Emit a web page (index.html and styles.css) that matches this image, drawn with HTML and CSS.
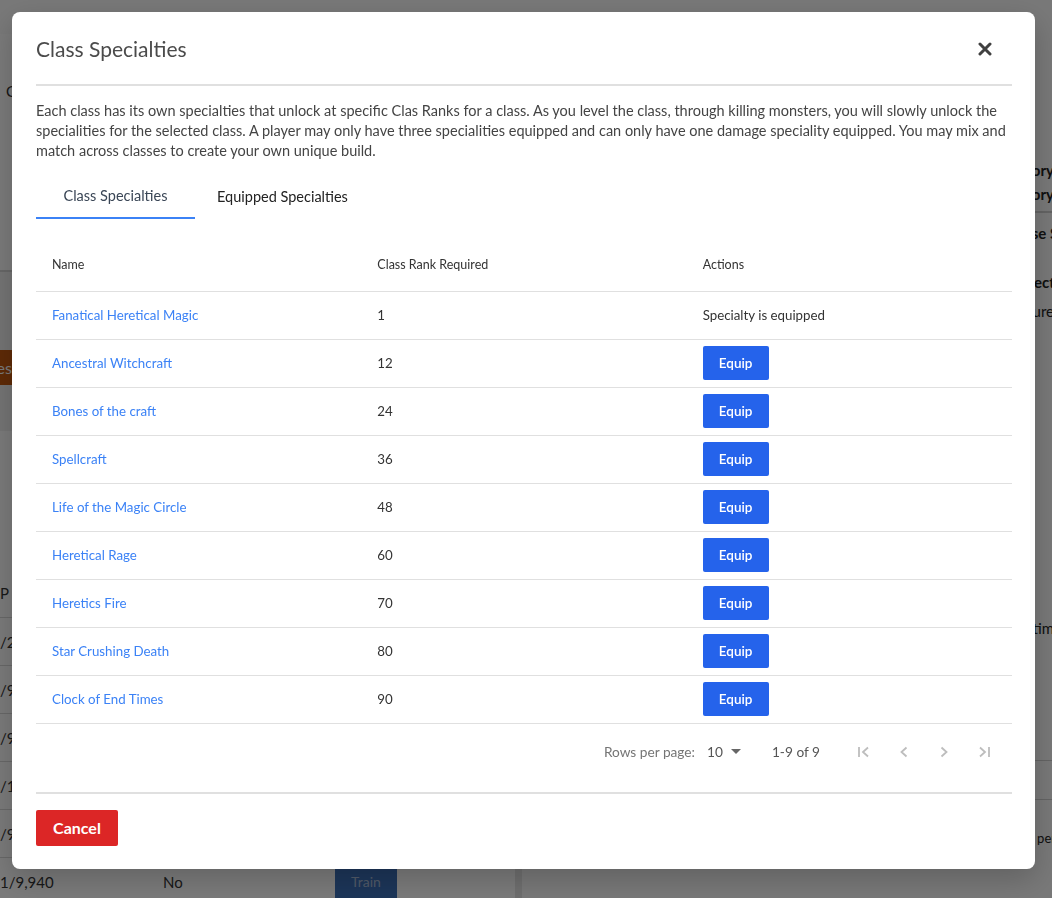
FILE: index.html
```html
<!DOCTYPE html>
<html lang="en">
<head>
<meta charset="utf-8">
<title>Class Specialties</title>
<link rel="stylesheet" href="styles.css">
</head>
<body>
<div class="page">
  <div class="nav"></div>
  <div class="main">
    <div class="left-col">
      <div class="card-top"><span class="frag">Class Information</span></div>
      <div class="btn-row"><span class="orange-btn">Classes</span></div>
      <div class="skill-table">
        <div class="srow shead"><span class="c1">P</span></div>
        <div class="srow"><span class="c1">/28</span></div>
        <div class="srow"><span class="c1">/9,940</span></div>
        <div class="srow"><span class="c1">/9,940</span></div>
        <div class="srow"><span class="c1">/10,000</span></div>
        <div class="srow"><span class="c1">/99</span></div>
        <div class="srow last"><span class="c1">1/9,940</span><span class="no">No</span><span class="train">Train</span></div>
      </div>
    </div>
    <div class="right-col">
      <div class="rcard">
        <div class="rline bold"><span>Inventory</span></div>
        <div class="rline bold"><span>Inventory</span></div>
        <div class="rdiv"></div>
        <div class="rline bold r-s"><span class="cut">Use Skills</span></div>
        <div class="rline bold r-on"><span class="cut2">Section</span></div>
        <div class="rline r-ure"><span class="cut3">Measure</span></div>
        <div class="rline r-tim"><span class="cut4">Estimate time</span></div>
        <div class="rdiv r-d2"></div>
        <div class="rdiv r-d3"></div>
        <div class="rline r-per"><span class="cut5">per</span></div>
      </div>
    </div>
  </div>
</div>
<div class="overlay"></div>

<div class="modal" role="dialog">
  <div class="modal-header">
    <h2 class="modal-title">Class Specialties</h2>
    <button class="close-btn" aria-label="Close">
      <svg width="14" height="14" viewBox="0 0 14 14"><path d="M2 2 L12 12 M12 2 L2 12" stroke="#404040" stroke-width="3" stroke-linecap="round"/></svg>
    </button>
  </div>
  <div class="modal-body">
    <p class="desc">Each class has its own specialties that unlock at specific Clas Ranks for a class. As you level the class, through killing monsters, you will slowly unlock the specialities for the selected class. A player may only have three specialities equipped and can only have one damage speciality equipped. You may mix and match across classes to create your own unique build.</p>
    <div class="tabs">
      <div class="tab active">Class Specialties</div>
      <div class="tab">Equipped Specialties</div>
    </div>
    <table class="spec-table">
      <thead>
        <tr><th>Name</th><th>Class Rank Required</th><th>Actions</th></tr>
      </thead>
      <tbody>
        <tr><td><a href="#">Fanatical Heretical Magic</a></td><td>1</td><td>Specialty is equipped</td></tr>
        <tr><td><a href="#">Ancestral Witchcraft</a></td><td>12</td><td><button class="equip">Equip</button></td></tr>
        <tr><td><a href="#">Bones of the craft</a></td><td>24</td><td><button class="equip">Equip</button></td></tr>
        <tr><td><a href="#">Spellcraft</a></td><td>36</td><td><button class="equip">Equip</button></td></tr>
        <tr><td><a href="#">Life of the Magic Circle</a></td><td>48</td><td><button class="equip">Equip</button></td></tr>
        <tr><td><a href="#">Heretical Rage</a></td><td>60</td><td><button class="equip">Equip</button></td></tr>
        <tr><td><a href="#">Heretics Fire</a></td><td>70</td><td><button class="equip">Equip</button></td></tr>
        <tr><td><a href="#">Star Crushing Death</a></td><td>80</td><td><button class="equip">Equip</button></td></tr>
        <tr><td><a href="#">Clock of End Times</a></td><td>90</td><td><button class="equip">Equip</button></td></tr>
      </tbody>
    </table>
    <div class="pagination">
      <span class="rpp">Rows per page:</span>
      <span class="rpp-select">10
        <svg width="10" height="5" viewBox="0 0 10 5"><path d="M0 0 L10 0 L5 5 Z" fill="#666"/></svg>
      </span>
      <span class="range">1-9 of 9</span>
      <span class="pg-icons">
        <svg width="14" height="14" viewBox="0 0 14 14"><path d="M2 2 V12" stroke="#bdbdbd" stroke-width="1.8"/><path d="M11 2.5 L6 7 L11 11.5" stroke="#bdbdbd" stroke-width="1.8" fill="none"/></svg>
        <svg width="14" height="14" viewBox="0 0 14 14"><path d="M9.5 2.5 L4.5 7 L9.5 11.5" stroke="#bdbdbd" stroke-width="1.8" fill="none"/></svg>
        <svg width="14" height="14" viewBox="0 0 14 14"><path d="M4.5 2.5 L9.5 7 L4.5 11.5" stroke="#bdbdbd" stroke-width="1.8" fill="none"/></svg>
        <svg width="14" height="14" viewBox="0 0 14 14"><path d="M3 2.5 L8 7 L3 11.5" stroke="#bdbdbd" stroke-width="1.8" fill="none"/><path d="M12 2 V12" stroke="#bdbdbd" stroke-width="1.8"/></svg>
      </span>
    </div>
  </div>
  <div class="modal-footer">
    <button class="cancel">Cancel</button>
  </div>
</div>
</body>
</html>
```

FILE: styles.css
```css
* { box-sizing: border-box; }
html, body { margin: 0; padding: 0; }
body {
  width: 1052px;
  height: 898px;
  overflow: hidden;
  font-family: "Lato", "Noto Sans", sans-serif;
  color: #333;
  background: #e6e6e6;
}

/* background page (dimmed behind the dialog) */
.page { width: 1052px; height: 898px; }
.nav { height: 34px; background: #fbfbfb; }
.main {
  display: grid;
  grid-template-columns: 515px 1fr;
  gap: 7px;
}
.left-col { display: flex; flex-direction: column; }
.card-top {
  background: #ffffff;
  height: 238px;
  padding: 48px 0 0 6px;
  border-bottom: 2px solid #d6d6d6;
  font-size: 15px;
}
.btn-row { padding-top: 78px; height: 159px; background: #f2f2f2; overflow: hidden; }
.orange-btn {
  display: inline-block;
  margin-left: -40px;
  height: 35px;
  line-height: 35px;
  width: 52px;
  text-align: right;
  background: #c4580f;
  color: #fff;
  font-size: 16px;
  overflow: hidden;
}
.skill-table { background: #fff; padding-top: 137px; }
.srow {
  height: 48px;
  border-bottom: 1px solid #d8d8d8;
  display: flex;
  align-items: center;
  font-size: 15px;
}
.shead { height: 50px; }
.c1 { width: 163px; white-space: nowrap; }
.no { width: 172px; }
.train {
  width: 62px;
  height: 34px;
  line-height: 34px;
  text-align: center;
  background: #3b6fb8;
  color: #a9bcd9;
  font-size: 14px;
}
.rcard { background: #fafafa; height: 898px; padding-top: 124px; font-size: 15px; }
.rline {
  height: 24px;
  line-height: 24px;
  color: #222;
  white-space: nowrap;
  overflow: hidden;
  text-align: right;
}
.rline span { display: inline-block; }
.bold { font-weight: 700; }
.rline:first-child span, .rline:nth-child(2) span { margin-right: -2px; }
.rdiv { height: 2px; background: #cfcfcf; margin: 5px 0 0; }
.r-s { margin-top: 8px; }
.cut { margin-right: -32px; }
.r-on { margin-top: 25px; }
.cut2 { margin-right: -24px; }
.r-ure { margin-top: 5px; }
.cut3 { margin-right: -2px; }
.r-tim { margin-top: 293px; }
.cut4 { margin-right: -10px; }
.r-d2 { margin-top: 120px; height: 1px; }
.r-d3 { margin-top: 38px; height: 1px; }
.r-per { margin-top: 26px; font-size: 13px; }
.cut5 { margin-right: -4px; }

.overlay {
  position: fixed;
  inset: 0;
  background: rgba(0, 0, 0, 0.52);
}

/* dialog */
.modal {
  position: fixed;
  left: 12px;
  top: 12px;
  width: 1023px;
  height: 857px;
  background: #fff;
  border-radius: 8px;
  padding: 24px 23px 23px 24px;
  display: flex;
  flex-direction: column;
  box-shadow: 0 10px 30px rgba(0,0,0,0.2);
}
.modal-header {
  display: flex;
  align-items: flex-start;
  justify-content: space-between;
  height: 50px;
  padding-bottom: 22px;
  border-bottom: 2px solid #e0e0e0;
}
.modal-title {
  margin: 0;
  font-size: 21px;
  line-height: 26px;
  font-weight: 400;
  color: #4b4b4b;
}
.close-btn {
  border: 0;
  background: none;
  padding: 0;
  margin: 6px 20px 0 0;
  width: 14px;
  height: 14px;
  cursor: pointer;
  display: flex;
}
.modal-body { display: flex; flex-direction: column; }
.desc {
  margin: 15px 0 0;
  font-size: 14.5px;
  line-height: 20px;
  color: #444;
}
.tabs { display: flex; margin-top: 14px; }
.tab {
  height: 44px;
  line-height: 44px;
  padding: 0 22px;
  font-size: 14.5px;
  color: #222;
  text-align: center;
}
.tab.active {
  min-width: 159px;
  color: #3a4656;
  box-shadow: inset 0 -2px 0 #3b82f6;
  line-height: 42px;
}
.spec-table {
  margin-top: 20px;
  width: 100%;
  border-collapse: collapse;
  table-layout: fixed;
  font-size: 13.3px;
}
.spec-table th {
  text-align: left;
  font-weight: 400;
  font-size: 12.5px;
  color: #333;
  height: 52px;
  padding: 0 16px;
  border-bottom: 1px solid #e0e0e0;
}
.spec-table td {
  height: 48px;
  padding: 0 16px;
  border-bottom: 1px solid #e0e0e0;
  color: #333;
}
.spec-table a { color: #3b82f6; text-decoration: none; }
.equip {
  width: 66px;
  height: 34px;
  border: 0;
  border-radius: 2px;
  background: #2563eb;
  color: #fff;
  font-family: inherit;
  font-size: 13.5px;
  font-weight: 600;
  cursor: pointer;
  display: block;
}
.pagination {
  height: 56px;
  display: flex;
  align-items: center;
  justify-content: flex-end;
  font-size: 13.7px;
  color: #757575;
}
.rpp { margin-right: 12px; }
.rpp-select { display: inline-flex; align-items: center; gap: 8px; color: #555; }
.range { margin-left: 31px; margin-right: 37px; color: #555; }
.pg-icons { display: inline-flex; gap: 26px; margin-right: 21px; }
.pg-icons svg { display: block; }
.modal-footer {
  margin-top: 12px;
  border-top: 2px solid #e0e0e0;
  padding-top: 16px;
}
.cancel {
  width: 82px;
  height: 36px;
  border: 0;
  border-radius: 2px;
  background: #dc2626;
  color: #fff;
  font-family: inherit;
  font-weight: 700;
  font-size: 16px;
  cursor: pointer;
}
```
